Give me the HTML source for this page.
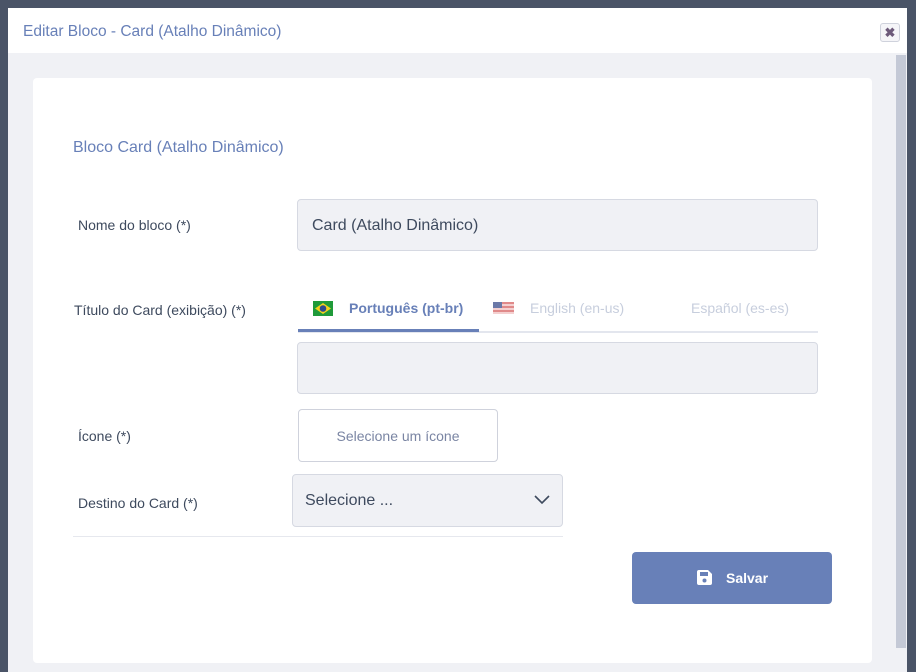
<!DOCTYPE html>
<html><head><meta charset="utf-8"><style>
*{box-sizing:border-box;margin:0;padding:0}
body{width:916px;height:672px;overflow:hidden;background:#4a5467;font-family:"Liberation Sans",sans-serif;position:relative}
.modal{position:absolute;left:8px;top:8px;width:899px;height:664px;background:#f0f1f5}
.hdr{position:absolute;left:0;top:0;width:899px;height:45px;background:#fff;}
.hdr .t{position:absolute;left:15px;top:15px;font-size:15.5px;color:#6880b8}
.close{position:absolute;left:872px;top:15px;width:20px;height:19px;border:1px solid #cfd2dc;border-radius:3px;background:#f5f5f8;color:#6d5a7a;font-weight:bold;font-size:13px;text-align:center;line-height:17px}
.sb{position:absolute;left:888px;top:47px;width:10px;height:593px;background:#c4c9d6}
.a{position:absolute}
.lbl{font-size:14px;color:#3e4a5e}
.inp{border:1px solid #d6d9e2;background:#f0f1f5;border-radius:4px}
</style></head><body>
<div class="modal">
<div class="hdr"><div class="t">Editar Bloco - Card (Atalho Dinâmico)</div><div class="close">✖</div></div>
<div class="sb"></div>
</div>
<div class="a" style="left:33px;top:78px;width:839px;height:585px;background:#fff;border-radius:4px"></div>
<div class="a" style="left:73px;top:139px;font-size:16px;color:#6880b8">Bloco Card (Atalho Dinâmico)</div>
<div class="a lbl" style="left:78px;top:217px">Nome do bloco (*)</div>
<div class="a inp" style="left:297px;top:199px;width:521px;height:52px"></div>
<div class="a" style="left:312px;top:217px;font-size:16px;color:#3e4a5e">Card (Atalho Dinâmico)</div>
<div class="a lbl" style="left:74px;top:302px">Título do Card (exibição) (*)</div>
<div class="a" style="left:298px;top:331px;width:520px;height:2px;background:#e3e6ee"></div>
<div class="a" style="left:298px;top:329px;width:181px;height:3px;background:#6880b8"></div>
<svg class="a" style="left:313px;top:301px" width="20" height="15"><rect width="20" height="15" fill="#1f9a3a"/><polygon points="10,2 18,7.5 10,13 2,7.5" fill="#f3d21c"/><circle cx="10" cy="7.5" r="3.3" fill="#2c4a8c"/></svg>
<div class="a" style="left:349px;top:300px;font-size:14px;font-weight:bold;color:#6880b8">Português (pt-br)</div>
<svg class="a" style="left:493px;top:302px" width="21" height="12"><rect width="21" height="12" fill="#f4d0d0"/><rect y="0" width="21" height="2" fill="#e08a8a"/><rect y="4" width="21" height="2" fill="#e08a8a"/><rect y="8" width="21" height="2" fill="#e08a8a"/><rect width="9" height="6" fill="#6b79a8"/></svg>
<div class="a" style="left:530px;top:300px;font-size:14px;color:#c7cedd">English (en-us)</div>
<div class="a" style="left:691px;top:300px;font-size:14px;color:#c7cedd">Español (es-es)</div>
<div class="a inp" style="left:297px;top:342px;width:521px;height:52px"></div>
<div class="a lbl" style="left:78px;top:428px">Ícone (*)</div>
<div class="a" style="left:298px;top:409px;width:200px;height:53px;border:1px solid #cfd2dc;border-radius:4px;font-size:14px;color:#7a85a3;text-align:center;line-height:53px">Selecione um ícone</div>
<div class="a lbl" style="left:78px;top:495px">Destino do Card (*)</div>
<div class="a inp" style="left:292px;top:474px;width:271px;height:53px"></div>
<div class="a" style="left:305px;top:492px;font-size:16px;color:#3e4a5e">Selecione ...</div>
<svg class="a" style="left:534px;top:495px" width="16" height="10"><path d="M1 1 L8 8 L15 1" fill="none" stroke="#3e4a5e" stroke-width="1.6"/></svg>
<div class="a" style="left:73px;top:536px;width:490px;height:1px;background:#e6e8ee"></div>
<div class="a" style="left:632px;top:552px;width:200px;height:52px;background:#6880b8;border-radius:4px"></div>
<svg class="a" style="left:697px;top:570px" width="15" height="15"><path d="M0 2 Q0 0 2 0 H11 L15 4 V13 Q15 15 13 15 H2 Q0 15 0 13 Z" fill="#fff"/><rect x="3" y="2" width="8" height="4" fill="#6880b8"/><circle cx="7.5" cy="10.5" r="2" fill="#6880b8"/></svg>
<div class="a" style="left:726px;top:570px;font-size:14px;font-weight:bold;color:#fff">Salvar</div>
</body></html>
